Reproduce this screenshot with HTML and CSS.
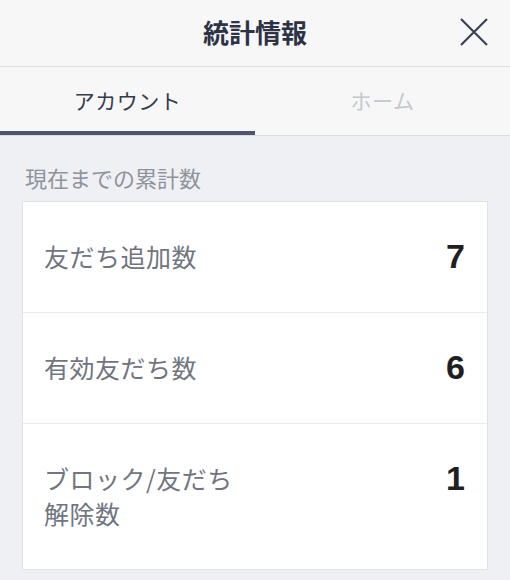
FILE: index.html
```html
<!DOCTYPE html>
<html lang="ja">
<head>
<meta charset="utf-8">
<title>統計情報</title>
<link rel="stylesheet" href="styles.css">
</head>
<body>
<div class="screen">
  <header class="header">
    <h1 class="title">統計情報</h1>
    <button class="close" aria-label="閉じる">
      <svg width="28" height="28" viewBox="0 0 28 28"><path d="M1 1 L27 27 M27 1 L1 27" stroke="#3b4256" stroke-width="2.2" fill="none"/></svg>
    </button>
  </header>
  <nav class="tabs">
    <div class="tab active">アカウント</div>
    <div class="tab">ホーム</div>
  </nav>
  <main class="content">
    <div class="section-label">現在までの累計数</div>
    <div class="card">
      <div class="row"><div class="label">友だち追加数</div><div class="value">7</div></div>
      <div class="row"><div class="label">有効友だち数</div><div class="value">6</div></div>
      <div class="row"><div class="label">ブロック/友だち<br>解除数</div><div class="value">1</div></div>
    </div>
  </main>
</div>
</body>
</html>
```
FILE: styles.css
```css
* { box-sizing: border-box; }
html, body { margin: 0; padding: 0; }
body {
  background: #eff0f3;
  font-family: "Noto Sans CJK JP", "Noto Sans", sans-serif;
  width: 510px;
  height: 580px;
  overflow: hidden;
}
.screen { display: flex; flex-direction: column; }
.header {
  position: relative;
  height: 67px;
  background: #f7f7f8;
  border-bottom: 1px solid #dcdde1;
  display: flex;
  align-items: center;
  justify-content: center;
}
.title {
  margin: 0;
  font-size: 26px;
  font-weight: 700;
  color: #2d3345;
  line-height: 1;
  padding-bottom: 3px;
}
.close {
  position: absolute;
  right: 22px;
  top: 18px;
  width: 28px;
  height: 28px;
  padding: 0;
  border: 0;
  background: none;
  display: flex;
}
.tabs {
  display: flex;
  height: 69px;
  background: #f7f7f8;
  border-bottom: 1px solid #dcdde1;
}
.tab {
  flex: 1;
  display: flex;
  align-items: center;
  justify-content: center;
  font-size: 21px;
  letter-spacing: 0.5px;
  color: #c4c7cd;
  border-bottom: 4px solid transparent;
  padding-top: 2px;
}
.tab.active {
  color: #353b4c;
  border-bottom-color: #50556f;
}
.content { padding: 28px 22px 0 22px; }
.section-label {
  font-size: 22px;
  line-height: 26px;
  color: #8e939c;
  padding-left: 3px;
  margin-bottom: 11px;
}
.card {
  background: #fff;
  border: 1px solid #dfe1e6;
}
.row {
  display: flex;
  justify-content: space-between;
  align-items: flex-start;
  padding: 37px 22px 38px 21px;
  border-bottom: 1px solid #e9eaed;
}
.row:last-child { border-bottom: 0; }
.label {
  font-size: 25px;
  letter-spacing: 0.5px;
  line-height: 35px;
  color: #70757f;
}
.value {
  font-family: "Liberation Sans", Arial, sans-serif;
  font-weight: 700;
  font-size: 34px;
  line-height: 35px;
  color: #1f1f22;
}
```
